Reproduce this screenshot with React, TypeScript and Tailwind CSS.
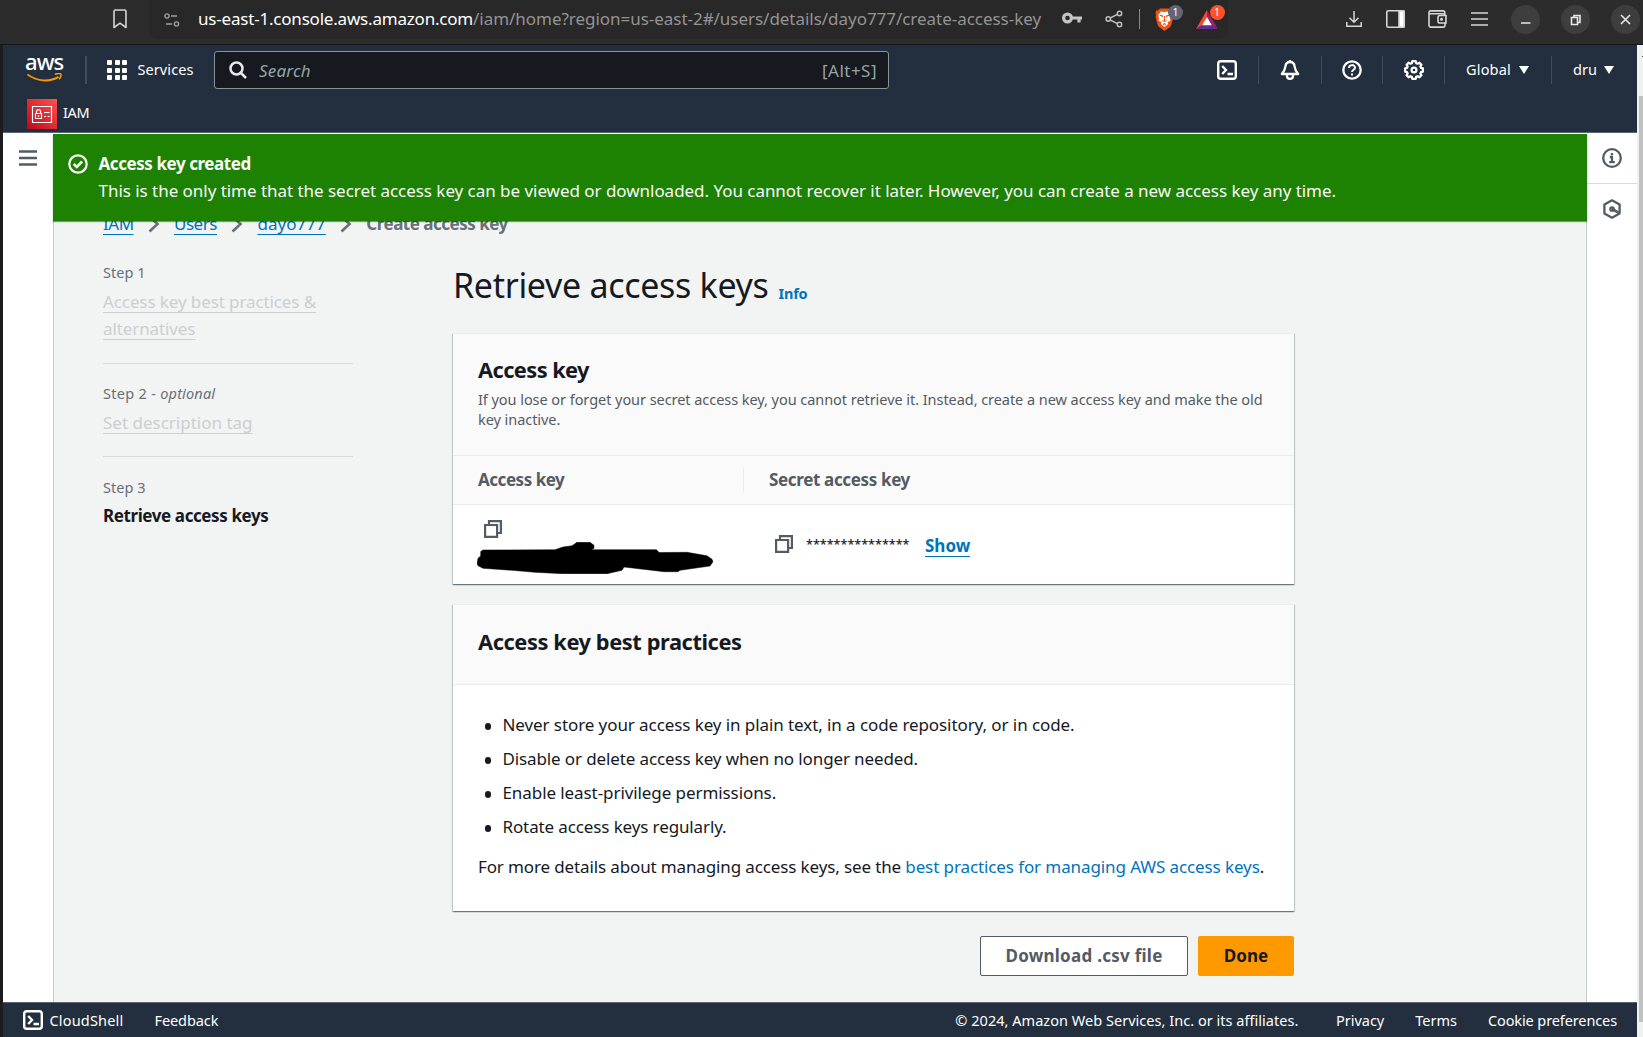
import type { ReactNode } from "react";

type IconProps = { className?: string };

function Svg({ className = "", box = 16, children }: IconProps & { box?: number; children: ReactNode }) {
  return (
    <svg
      viewBox={`0 0 ${box} ${box}`}
      className={`block shrink-0 ${className}`}
      fill="none"
      stroke="currentColor"
      strokeWidth={2.3}
      strokeLinejoin="round"
    >
      {children}
    </svg>
  );
}

const ShellIcon = ({ className = "" }: IconProps) => (
  <Svg box={20} className={`size-5 ${className}`}>
    <rect x="1.2" y="1.2" width="17.6" height="17.6" rx="2.6" strokeWidth="2.4" />
    <path d="M5.200 6 9 10l-3.800 4M10.500 14H16" strokeLinejoin="miter" strokeWidth="2.400" />
  </Svg>
);

const CopyIcon = () => (
  <svg viewBox="0 0 18 18" className="block size-[18px] shrink-0 text-[#545b64]" fill="none" stroke="currentColor" strokeWidth="2.200">
    <path d="M1.100 5h12v11.900h-12z" />
    <path d="M5 5V1.100h11.900V13h-3.800" />
  </svg>
);

const Chevron = () => (
  <svg viewBox="0 0 12 18" className="block h-[18px] w-3 shrink-0 text-[#687078]" fill="none" stroke="currentColor" strokeWidth="2.6">
    <path d="m1.500 1.500 8 7.500-8 7.500" />
  </svg>
);

const Caret = () => <span className="h-0 w-0 border-x-[5.5px] border-t-[8px] border-x-transparent border-t-white" />;

function BrowserBar() {
  return (
    <div className="flex h-[45px] items-start border-b border-[#161616] bg-[#2c2c2c] text-[#d6d6d6]">
      <svg viewBox="0 0 14 20" className="mt-[9px] ml-[113px] h-5 w-3.5 shrink-0" fill="none" stroke="currentColor" strokeWidth="1.600">
        <path d="M1 2.600C1 1.700 1.700 1 2.600 1h8.800c.9 0 1.600.7 1.600 1.600V18.500l-6-4.300-6 4.300z" strokeLinejoin="round" />
      </svg>
      <div className="ml-[22px] flex h-[39px] w-[1079px] shrink-0 items-center rounded-b-[10px] bg-[#282828] pl-[15px]">
        <svg viewBox="0 0 16 14" className="h-3.5 w-4 shrink-0 text-[#a0a0a0]" fill="none" stroke="currentColor" strokeWidth="1.400">
          <circle cx="3" cy="3" r="2.100" />
          <path d="M7 3h6M2 11h6" />
          <circle cx="12.500" cy="11" r="2.100" />
        </svg>
        <div className="-mt-[2px] ml-[18px] w-[864px] whitespace-nowrap text-[17px] leading-[38px] text-white">
          <span className="tracking-[-0.2px]">us-east-1.console.aws.amazon.com</span>
          <span className="tracking-[-0.034px] text-[#949494]">
            /iam/home?region=us-east-2#/users/details/dayo777/create-access-key
          </span>
        </div>
        <svg viewBox="0 0 20 12" className="-mt-[3px] h-3 w-5 shrink-0 text-[#c4c4c4]" fill="none" stroke="currentColor">
          <circle cx="5.500" cy="6" r="3.900" strokeWidth="3.200" />
          <path d="M10 6H20M17 6v4.500" strokeWidth="3.200" />
        </svg>
        <svg viewBox="0 0 18 18" className="-mt-[2px] ml-[23px] size-[18px] shrink-0 text-[#bdbdbd]" fill="none" stroke="currentColor" strokeWidth="1.500">
          <circle cx="3.200" cy="9" r="2.200" />
          <circle cx="14.500" cy="3.500" r="2.200" />
          <circle cx="14.500" cy="14.500" r="2.200" />
          <path d="m5.200 8 7.200-3.600M5.200 10l7.200 3.600" />
        </svg>
        <span className="-mt-px ml-4 h-5 w-px bg-[#8a8a8a]" />
        <div className="relative ml-[15px] h-[23px] w-[19px]">
          <svg viewBox="0 0 19 23" className="block h-[23px] w-[19px]">
            <path d="M5 .5h9l2 2 1.700-.2L18.500 5l-.6 2.500.6 1-2.300 8.700c-.3 1-1 1.700-1.900 2.300L9.500 23l-4.800-3.500c-.9-.6-1.600-1.300-1.900-2.300L.5 8.500l.6-1L.5 5l.8-2.700L3 2.500z" fill="#f2510f" />
            <path d="m9.500 4 3.500-.6 2.800 3.600-.8 3.500.5 2-3 1.700.7 1.700-3.700 3-3.700-3 .7-1.700-3-1.700.5-2L3.200 7 6 3.400z" fill="#fff" />
            <path d="m4.500 7.300 3 .7-.6 1.300M14.500 7.300l-3 .7.600 1.300M9.500 8v4.500M7.500 12.500l2 1 2-1M8 16.500l1.500-.8 1.500.8" fill="none" stroke="#f2510f" strokeWidth="1.100" />
          </svg>
          <span className="absolute -top-[3px] left-[13px] flex size-[15px] items-center justify-center rounded-full bg-[#62657a] text-[10.500px] leading-none text-white">
            1
          </span>
        </div>
        <div className="relative ml-[22px] h-[19px] w-[22px]">
          <svg viewBox="0 0 22 19" className="block h-[19px] w-[22px]">
            <path d="M11 0 0 19l11-7z" fill="#ff4724" />
            <path d="M11 0v12l11 7z" fill="#9e1f63" />
            <path d="M0 19h22l-11-7z" fill="#662d91" />
            <path d="m11 7 4.800 8.200H6.200z" fill="#fff" />
          </svg>
          <span className="absolute -top-[5.500px] left-[13.500px] flex size-[15px] items-center justify-center rounded-full bg-[#fb542b] text-[10.500px] leading-none text-white">
            1
          </span>
        </div>
      </div>
      <div className="ml-[118px] flex h-[38px] items-center">
        <svg viewBox="0 0 16 16" className="size-4 shrink-0" fill="none" stroke="currentColor" strokeWidth="1.500">
          <path d="M8 0v11M3.500 6.800 8 11.200l4.500-4.400M.8 11v4.200h14.400V11" />
        </svg>
        <svg viewBox="0 0 19 18" className="ml-6 h-[18px] w-[19px] shrink-0" fill="none" stroke="currentColor" strokeWidth="1.600">
          <rect x=".8" y=".8" width="17.400" height="16.400" rx="1.500" />
          <path d="M13 1h5v16h-5z" fill="#fff" />
        </svg>
        <svg viewBox="0 0 19 18" className="ml-[23px] h-[18px] w-[19px] shrink-0" fill="none" stroke="currentColor" strokeWidth="1.600">
          <path d="M1 2.500v13c0 1 .6 1.600 1.600 1.600h12.800c1 0 1.600-.6 1.600-1.600V13M1 2.500C1 1.500 1.600.9 2.600.9H15c1.200 0 1.800.6 1.800 1.800v2.800M1.500 3.800H15c1.200 0 1.900.6 1.900 1.700" />
          <path d="M18 5.500h-6c-1.300 0-2 .8-2 2v3.400c0 1.300.8 2.100 2 2.100h6z" />
          <circle cx="13.500" cy="9.300" r=".7" fill="currentColor" />
        </svg>
        <svg viewBox="0 0 17 14" className="ml-6 h-3.5 w-[17px] shrink-0" stroke="currentColor" strokeWidth="1.600">
          <path d="M0 1h17M0 7h17M0 13h17" />
        </svg>
        <div className="ml-[23px] flex gap-[21px] text-[#e8e8e8]">
          {["M10 18h9.500", "M10.500 12.500h6v7h-6zM13 12.500v-2h6v7h-2.500", "m10 10 9 9m0-9-9 9"].map((d) => (
            <svg key={d} viewBox="0 0 29 29" className="size-[29px] shrink-0 rounded-full bg-[#3e3e3e]" fill="none" stroke="currentColor" strokeWidth="1.600">
              <path d={d} />
            </svg>
          ))}
        </div>
      </div>
    </div>
  );
}

function NavBar() {
  return (
    <header className="border-b border-[#5b6675] bg-[#232f3e] text-[14.500px] text-white">
      <div className="flex h-[50px] items-center">
        <div className="ml-[22px] flex h-6 w-[39px] flex-col">
          <span className="-mt-[4px] h-[15px] text-[22px] font-medium leading-[15px] tracking-[-0.9px]">aws</span>
          <svg viewBox="0 0 39 10" className="mt-[4px] h-2.5 w-[39px]" fill="none" stroke="#ff9900" strokeWidth="2">
            <path d="M.5 1.500C11 9.500 25 10.500 35 4.300" />
            <path d="M31 1.300c3-.8 6-.8 6.600-.2s.2 3.400-1.800 5.800" strokeWidth="1.700" />
          </svg>
        </div>
        <span className="ml-[21px] h-7 w-0.5 bg-[#414d5c]" />
        <div className="ml-5 grid size-5 grid-cols-3 gap-[2.500px]">
          {Array.from({ length: 9 }, (_, i) => (
            <span key={i} className="rounded-[1px] bg-white" />
          ))}
        </div>
        <span className="ml-2.5 w-[77px] pl-[0.500px] tracking-[0.08px]">Services</span>
        <div className="flex h-[38px] w-[675px] items-center rounded-[3px] border border-[#879596] bg-[#16191f] px-[13px] text-[17px] text-[#95a5a6]">
          <svg viewBox="0 0 18 18" className="ml-px size-[18px] text-[#e6e9ea]" fill="none" stroke="currentColor" strokeWidth="2.500">
            <circle cx="7.500" cy="7.500" r="6" />
            <path d="m12 12 5 5" />
          </svg>
          <span className="ml-3 pt-[2px] italic tracking-[0.2px]">Search</span>
          <span className="ml-auto -mr-[2px] pt-[2px] tracking-[0.48px]">[Alt+S]</span>
        </div>
        <div className="ml-auto flex">
          <div className="flex h-7 w-[63px] items-center justify-center border-r border-[#414d5c]">
            <ShellIcon />
          </div>
          <div className="flex h-7 w-[63px] items-center justify-center border-r border-[#414d5c]">
            <Svg box={20} className="size-5">
              <path d="M10 2C7 2 5.600 4.200 5.400 6.500 5.100 9.500 4 11.500 1.800 14h16.400c-2.200-2.500-3.300-4.500-3.600-7.500C14.400 4.200 13 2 10 2zM10 0v2" />
              <path d="M7 15v1c0 1.600 1.200 2.800 3 2.800s3-1.200 3-2.800v-1" />
            </Svg>
          </div>
          <div className="flex h-7 w-[61px] items-center justify-center border-r border-[#414d5c]">
            <Svg box={20} className="size-5">
              <circle cx="10" cy="10" r="8.700" />
              <path d="M7 8c0-3.800 6-3.800 6-.2 0 2-3 2-3 4.200M10 13.400v2" strokeWidth="2" />
            </Svg>
          </div>
          <div className="flex h-7 w-[62px] items-center justify-center border-r border-[#414d5c]">
            <Svg box={20} className="size-5">
              <path d="m8.300 1.200-.5 1.900-1.400.6-1.800-1-2 2 1 1.800-.6 1.400-1.900.5v3.200l1.900.5.600 1.400-1 1.800 2 2 1.800-1 1.400.6.500 1.900h3.400l.5-1.900 1.400-.6 1.800 1 2-2-1-1.800.6-1.400 1.900-.5V8.400l-1.900-.5-.6-1.400 1-1.800-2-2-1.800 1-1.400-.6-.5-1.900z" />
              <circle cx="10" cy="10" r="2.400" />
            </Svg>
          </div>
          <div className="flex h-7 w-[107px] items-center gap-2 border-r border-[#414d5c] pl-[21px]">
            <span className="tracking-[0.18px]">Global</span>
            <Caret />
          </div>
          <div className="flex h-7 w-[85px] items-center gap-[7px] pl-[21px]">
            <span>dru</span>
            <Caret />
          </div>
        </div>
      </div>
      <div className="flex h-[37px] items-center gap-1.5 pl-6">
        <svg viewBox="0 0 30 30" className="mt-px size-[30px]" fill="none" stroke="#fff">
          <defs>
            <linearGradient id="iam" x1="0" y1="1" x2="1" y2="0">
              <stop stopColor="#bd0816" />
              <stop offset="1" stopColor="#ff5252" />
            </linearGradient>
          </defs>
          <path d="M0 0h30v30H0z" fill="url(#iam)" stroke="none" />
          <path d="M5.500 7.500h19v16h-19zM8.500 14.500h6v5h-6zM9.500 14.500v-2c0-2.600 4-2.600 4 0v2M11.500 16v2M17 13.500h5.500M17 17.500h2M20.500 17.500h2" strokeWidth="1.200" />
        </svg>
        <span className="-mt-[2px] tracking-[-0.4px]">IAM</span>
      </div>
    </header>
  );
}

const crumbs: { label: string; className: string }[] = [
  { label: "IAM", className: "tracking-[-0.5px]" },
  { label: "Users", className: "tracking-[-0.45px]" },
  { label: "dayo777", className: "tracking-[0.05px]" },
];

function Steps() {
  return (
    <nav className="-mt-px w-[250px] shrink-0 text-[14.500px] leading-5 text-[#687078]">
      <div className="border-b border-[#d5dbdb] pb-[21px]">
        <div className="tracking-[0.05px]">Step 1</div>
        <div className="mt-[6.500px] text-[17px] leading-[27px] tracking-[-0.1px] text-[#cbcfd0] underline decoration-1 underline-offset-[4px] [text-decoration-skip-ink:none]">
          Access key best practices &amp;
          <br />
          alternatives
        </div>
      </div>
      <div className="border-b border-[#d5dbdb] pb-5 pt-[18.500px]">
        <div>
          <span className="tracking-[0.3px]">Step 2 - </span>
          <i className="tracking-[0.16px]">optional</i>
        </div>
        <div className="mt-[6px] text-[17px] leading-[27.500px] text-[#cbcfd0] underline decoration-1 underline-offset-[4px] [text-decoration-skip-ink:none]">
          Set description tag
        </div>
      </div>
      <div className="pt-[19.500px]">
        <div className="tracking-[0.05px]">Step 3</div>
        <div className="mt-[5.500px] text-[17px] font-[670] leading-[27.500px] tracking-[-0.4px] text-[#16191f]">
          Retrieve access keys
        </div>
      </div>
    </nav>
  );
}

const cardShadow = "shadow-[0_1px_1px_0_rgba(0,28,36,0.4),1px_1px_1px_0_rgba(0,28,36,0.15),-1px_1px_1px_0_rgba(0,28,36,0.15)]";

function KeyCard() {
  return (
    <section className={`h-[251px] bg-white ${cardShadow}`}>
      <div className="h-[123px] border-t border-b border-[#eaeded] bg-[#fafafa] px-[25px] pt-[22px]">
        <h2 className="text-[21.800px] font-[670] leading-[27.500px] tracking-[-0.57px]">Access key</h2>
        <p className="mt-1.5 whitespace-nowrap text-[14.500px] leading-5 tracking-[-0.053px] text-[#545b64]">
          If you lose or forget your secret access key, you cannot retrieve it. Instead, create a new access key and make the old
          <br />
          key inactive.
        </p>
      </div>
      <div className="flex h-[49px] items-center border-b border-[#eaeded] bg-[#fafafa] pl-[25px] text-[17px] font-[670] text-[#545b64]">
        <div className="h-[26px] w-[266px] border-r border-[#eaeded] leading-[26px] tracking-[-0.47px]">Access key</div>
        <div className="pl-[25px] leading-[26px] tracking-[-0.35px]">Secret access key</div>
      </div>
      <div className="flex h-[79px]">
        <div className="w-[291px] pt-[15px]">
          <div className="pl-[31px]">
            <CopyIcon />
          </div>
          <svg viewBox="0 0 236 32" className="ml-6 mt-1 block h-8 w-[236px]">
            <path
              d="M3.700 9.500 6 8l72-.3L86 5l9-1.300L100 .3h13l4 3v3l-2.500 1.400h65L182 10.500l28-.2 20 3.500 5 3.500 1 2.400-3 4.300-30 4.300-2 1.400h-14l-40-4.700-2 3.300-15 3.400H86l-28-1.400-23-2-29-2-5-2.600-1-2 1-5.400L3.700 14z"
              fill="#000"
              stroke="#000"
              strokeWidth=".5"
              strokeLinejoin="round"
            />
          </svg>
        </div>
        <div className="flex h-[79px] items-center pl-[31px]">
          <CopyIcon />
          <span className="ml-[13px] w-[119px] pt-px text-[12.600px] font-medium leading-5 text-[#16191f]">***************</span>
          <span className="mt-[3px] border-b border-[#0073bb] text-[17px] font-[670] leading-[21px] tracking-[0px] text-[#0073bb]">Show</span>
        </div>
      </div>
    </section>
  );
}

const practices = [
  { text: "Never store your access key in plain text, in a code repository, or in code.", className: "tracking-[-0.082px]" },
  { text: "Disable or delete access key when no longer needed.", className: "tracking-[-0.123px]" },
  { text: "Enable least-privilege permissions.", className: "tracking-[-0.08px]" },
  { text: "Rotate access keys regularly.", className: "tracking-[-0.12px]" },
];

function PracticesCard() {
  return (
    <section className={`mt-5 h-[307px] bg-white text-[17px] ${cardShadow}`}>
      <div className="h-[81px] border-t border-b border-[#eaeded] bg-[#fafafa] px-[25px] pt-[23px]">
        <h2 className="text-[21.800px] font-[670] leading-[27.500px] tracking-[-0.41px]">Access key best practices</h2>
      </div>
      <ul className="px-[25px] pt-[23.500px]">
        {practices.map(({ text, className }) => (
          <li key={text} className={`flex h-[34px] items-center pl-[6.500px] ${className}`}>
            <span className="mr-[11.500px] mt-[3px] size-[6.500px] rounded-full bg-[#16191f]" />
            {text}
          </li>
        ))}
      </ul>
      <p className="mt-[9px] whitespace-nowrap px-[25px] leading-[27.500px] tracking-[-0.13px]">
        For more details about managing access keys, see the{" "}
        <span className="tracking-[-0.1px] text-[#0073bb]">best practices for managing AWS access keys</span>.
      </p>
    </section>
  );
}

function Content() {
  return (
    <main className="flex min-w-0 flex-1 flex-col">
      <div className="relative z-10 flex h-[87px] shrink-0 bg-[#1d8102] pl-[15px] pt-[15.500px] text-[17px] leading-[27.500px] text-[#fafafa] shadow-[0_1px_1px_0_rgba(0,28,36,0.45)]">
        <Svg box={20} className="mt-[4.500px] size-5">
          <circle cx="10" cy="10" r="8.700" />
          <path d="m5.700 10 3.100 3 5.300-5.500" strokeWidth="2.600" strokeLinejoin="miter" />
        </Svg>
        <div className="ml-[10.500px]">
          <div className="font-[670] tracking-[-0.43px]">Access key created</div>
          <div className="whitespace-nowrap tracking-[-0.036px]">
            This is the only time that the secret access key can be viewed or downloaded. You cannot recover it later. However, you
            can create a new access key any time.
          </div>
        </div>
      </div>
      <div className="flex-1 border-x border-[#c5cbcc] bg-[#f2f3f3] pl-[49px]">
        <div className="-mt-[11.500px] flex h-[27.500px] items-center text-[17px] leading-[25px]">
          {crumbs.map(({ label, className }) => (
            <div key={label} className="flex items-center">
              <span className={`${className} text-[#0073bb] underline decoration-1 underline-offset-[4px] [text-decoration-skip-ink:none]`}>
                {label}
              </span>
              <span className="ml-[14.400px] mr-[14px] pt-[2px]">
                <Chevron />
              </span>
            </div>
          ))}
          <span className="font-[670] tracking-[-0.49px] text-[#687078]">Create access key</span>
        </div>
        <div className="mt-[25.500px] flex gap-[100px]">
          <Steps />
          <div className="w-[841px]">
            <div className="flex h-[70px] items-baseline whitespace-nowrap">
              <h1 className="text-[34px] leading-[45px] tracking-[-0.31px]">Retrieve access keys</h1>
              <span className="relative top-px ml-[10px] text-[14.500px] font-[670] tracking-[-0.25px] text-[#0073bb]">Info</span>
            </div>
            <KeyCard />
            <PracticesCard />
            <div className="mt-[25px] flex justify-end gap-2.5 text-[17px] font-[670]">
              <button className="h-10 w-52 rounded-[2px] border border-[#545b64] bg-white pt-px tracking-[0.26px] text-[#545b64]">
                Download .csv file
              </button>
              <button className="h-10 w-24 rounded-[2px] bg-[#ff9900] pt-px tracking-[0px] text-[#16191f]">Done</button>
            </div>
          </div>
        </div>
      </div>
    </main>
  );
}

export default function App() {
  return (
    <div className="flex h-[1037px] w-[1643px] flex-col overflow-hidden bg-white font-['Noto_Sans',sans-serif] text-[#16191f]">
      <BrowserBar />
      <div className="flex min-h-0 flex-1 border-l-3 border-[#1c1c1c]">
        <div className="flex w-[1634px] shrink-0 flex-col">
          <NavBar />
          <div className="flex min-h-0 flex-1 border-t border-white">
            <aside className="w-[50px] shrink-0 pl-4 pt-4">
              <svg viewBox="0 0 18 16" className="block h-4 w-[18px] text-[#545b64]" stroke="currentColor" strokeWidth="2.400">
                <path d="M0 1.500h18M0 8h18M0 14.500h18" />
              </svg>
            </aside>
            <Content />
            <aside className="flex w-[50px] shrink-0 flex-col items-center text-[#545b64]">
              <div className="flex h-[50px] w-full items-center justify-center border-b border-[#d5dbdb] pb-px">
                <Svg box={20} className="size-5">
                  <circle cx="10" cy="10" r="8.800" />
                  <path d="M10 5v2.200M7.800 9H10v5M7.200 14.200h5.600" />
                </Svg>
              </div>
              <Svg box={20} className="mt-[15px] size-5">
                <path d="m10 1.300 7.600 4.200v9L10 18.700l-7.600-4.200v-9z" />
                <circle cx="10" cy="10" r="1.700" />
                <path d="m10 10 6.500 3.700" strokeWidth="2.600" />
              </Svg>
            </aside>
          </div>
          <footer className="flex h-[35px] shrink-0 items-center border-t border-[#5b6675] bg-[#232f3e] pl-5 pr-[20px] pt-px text-[14.500px] text-white">
            <ShellIcon className="-mt-px" />
            <span className="ml-[6.500px] tracking-[0.18px]">CloudShell</span>
            <span className="ml-[31px] tracking-[-0.07px]">Feedback</span>
            <span className="ml-auto tracking-[0.031px]">© 2024, Amazon Web Services, Inc. or its affiliates.</span>
            <span className="ml-[37.500px]">Privacy</span>
            <span className="ml-[31px]">Terms</span>
            <span className="ml-[31px] tracking-[-0.11px]">Cookie preferences</span>
          </footer>
        </div>
        <div className="flex w-1.5 flex-col bg-[#f1f1f1] pl-0.5">
          <span className="mt-[11px] ml-[3px] h-px w-px bg-[#505050]" />
          <span className="mt-[39px] h-[926px] bg-[#c1c1c1]" />
        </div>
      </div>
    </div>
  );
}
